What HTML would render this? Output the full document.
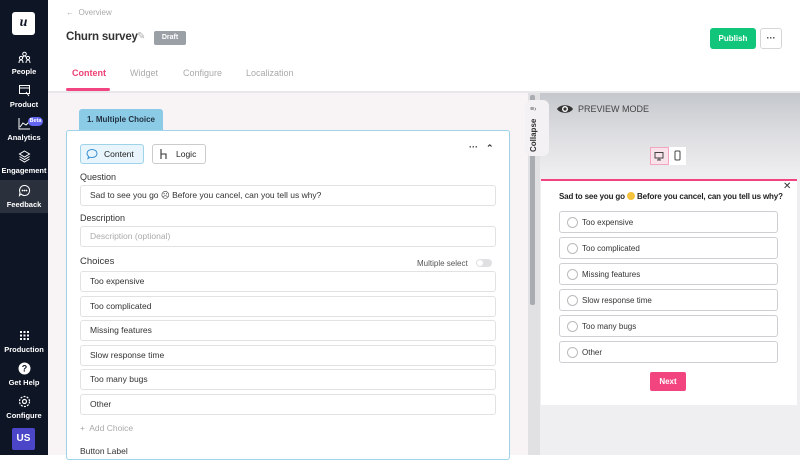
<!DOCTYPE html>
<html><head><style>
*{box-sizing:border-box;margin:0;padding:0}
body{width:800px;height:455px;overflow:hidden;font-family:"Liberation Sans",sans-serif;background:#fff;position:relative;color:#333}
.a{position:absolute}
.sb{left:0;top:0;width:48px;height:455px;background:#0e1525}
.ni{position:absolute;left:0;width:48px;text-align:center;color:#fff;font-size:7.5px;font-weight:bold}
.ni svg{display:block;margin:0 auto 3px}
.inp{position:absolute;left:80px;width:416px;height:21px;border:1px solid #e2e2e4;border-radius:3px;background:#fff;font-size:8.5px;padding-left:9px;line-height:19px;color:#333}
.lbl{position:absolute;left:80px;font-size:9px;color:#333}
.op{position:absolute;left:559px;width:219px;height:22px;border:1px solid #cfcfd3;border-radius:3px;font-size:8px;line-height:21px;padding-left:22px;color:#333}
.op:before{content:"";position:absolute;left:7px;top:5px;width:9px;height:9px;border:1px solid #bbb;border-radius:50%}
</style></head><body>
<div class="a sb"></div>
<div class="a" style="left:12px;top:12px;width:23px;height:23px;background:#fff;border-radius:3px;font:italic bold 14px 'Liberation Serif',serif;color:#0e1525;text-align:center;line-height:22px">u</div>
<div class="ni" style="top:51px"><svg width="13" height="13" viewBox="0 0 13 13" fill="none" stroke="#fff" stroke-width="1"><circle cx="6.5" cy="3" r="1.8"/><circle cx="3" cy="7" r="1.6"/><circle cx="10" cy="7" r="1.6"/><path d="M1 12c0-2 1-3 2-3s2 1 2 3M8 12c0-2 1-3 2-3s2 1 2 3M4.5 8c0-2 1-3 2-3s2 1 2 3"/></svg>People</div>
<div class="ni" style="top:84px"><svg width="13" height="13" viewBox="0 0 13 13" fill="none" stroke="#fff" stroke-width="1"><rect x="1.5" y="1.5" width="10" height="8"/><path d="M1.5 4h10M8 8l3 4"/></svg>Product</div>
<div class="ni" style="top:117px"><svg width="13" height="13" viewBox="0 0 13 13" fill="none" stroke="#fff" stroke-width="1"><path d="M1 1v11h11M2 10l3-4 3 2 4-4"/></svg>Analytics</div>
<div class="a" style="left:28px;top:117px;width:15px;height:9px;background:#6366f1;border-radius:5px;color:#fff;font-size:5.5px;text-align:center;line-height:9px;font-weight:bold">Beta</div>
<div class="ni" style="top:150px"><svg width="13" height="13" viewBox="0 0 13 13" fill="none" stroke="#fff" stroke-width="1"><path d="M6.5 1l5 3-5 3-5-3zM1.5 6.5l5 3 5-3M1.5 9l5 3 5-3"/></svg>Engagement</div>
<div class="a" style="left:0;top:180px;width:48px;height:33px;background:#2a303c"></div>
<div class="ni" style="top:184px"><svg width="13" height="13" viewBox="0 0 13 13" fill="none" stroke="#fff" stroke-width="1"><path d="M6.5 1.5a5 5 0 1 1-3.5 8.5L1.5 11.5l.5-3a5 5 0 0 1 4.5-7z"/><circle cx="4.5" cy="6.5" r=".4"/><circle cx="6.5" cy="6.5" r=".4"/><circle cx="8.5" cy="6.5" r=".4"/></svg>Feedback</div>
<div class="ni" style="top:329px"><svg width="13" height="13" viewBox="0 0 13 13" fill="#fff"><rect x="2" y="2" width="2" height="2"/><rect x="5.5" y="2" width="2" height="2"/><rect x="9" y="2" width="2" height="2"/><rect x="2" y="5.5" width="2" height="2"/><rect x="5.5" y="5.5" width="2" height="2"/><rect x="9" y="5.5" width="2" height="2"/><rect x="2" y="9" width="2" height="2"/><rect x="5.5" y="9" width="2" height="2"/><rect x="9" y="9" width="2" height="2"/></svg>Production</div>
<div class="ni" style="top:362px"><svg width="13" height="13" viewBox="0 0 13 13"><circle cx="6.5" cy="6.5" r="6" fill="#fff"/><text x="6.5" y="9.5" font-size="9" font-weight="bold" text-anchor="middle" fill="#0e1525">?</text></svg>Get Help</div>
<div class="ni" style="top:395px"><svg width="13" height="13" viewBox="0 0 13 13" fill="none" stroke="#fff" stroke-width="1.2"><circle cx="6.5" cy="6.5" r="2"/><circle cx="6.5" cy="6.5" r="5" stroke-dasharray="2 1.2"/></svg>Configure</div>
<div class="a" style="left:12px;top:428px;width:23px;height:22px;background:#4b46c8;border-radius:2px;color:#fff;font-size:10px;font-weight:bold;text-align:center;line-height:22px">US</div>

<div class="a" style="left:66px;top:8px;font-size:8px;color:#aaa">&#8592;&nbsp;&nbsp;Overview</div>
<div class="a" style="left:66px;top:31px;font-size:11.5px;font-weight:bold;color:#333;letter-spacing:-0.2px">Churn survey</div>
<div class="a" style="left:137px;top:31px;font-size:10px;color:#aaa">&#9998;</div>
<div class="a" style="left:154px;top:31px;width:32px;height:14px;background:#9aa0a6;border-radius:2px;color:#fff;font-size:7px;font-weight:bold;text-align:center;line-height:14px">Draft</div>
<div class="a" style="left:710px;top:28px;width:46px;height:21px;background:#11c57a;border-radius:3px;color:#fff;font-size:8px;font-weight:bold;text-align:center;line-height:21px">Publish</div>
<div class="a" style="left:760px;top:28px;width:22px;height:21px;border:1px solid #d6d6d8;border-radius:3px;text-align:center;line-height:19px;font-size:9px;color:#333;font-weight:bold">···</div>
<div class="a" style="left:72px;top:68px;font-size:9px;font-weight:bold;color:#ee3f74">Content</div>
<div class="a" style="left:130px;top:68px;font-size:9px;color:#aaa">Widget</div>
<div class="a" style="left:183px;top:68px;font-size:9px;color:#aaa">Configure</div>
<div class="a" style="left:246px;top:68px;font-size:9px;color:#aaa">Localization</div>
<div class="a" style="left:66px;top:88px;width:44px;height:3px;background:#f2457f;border-radius:2px"></div>
<div class="a" style="left:48px;top:91px;width:752px;height:2px;background:#e8e8ea"></div>

<div class="a" style="left:48px;top:93px;width:480px;height:362px;background:#f8f4f6"></div>
<div class="a" style="left:79px;top:109px;width:84px;height:22px;background:#8ccbe5;border-radius:3px 3px 0 0;font-size:8px;font-weight:bold;color:#234;text-align:center;line-height:21px">1. Multiple Choice</div>
<div class="a" style="left:66px;top:130px;width:444px;height:330px;background:#fff;border:1px solid #9fd3ea;border-radius:3px"></div>
<div class="a" style="left:80px;top:144px;width:64px;height:20px;border:1px solid #9fd3ea;background:#e8f5fc;border-radius:3px;font-size:8.5px;line-height:18px;padding-left:23px;color:#222">Content</div>
<svg class="a" style="left:86px;top:148px" width="12" height="12" viewBox="0 0 12 12" fill="none" stroke="#3a8fd0" stroke-width="1"><path d="M6 1.5c3 0 5 1.8 5 4s-2 4-5 4c-.7 0-1.3-.1-1.9-.3L2 10.5l.6-2.2C1.6 7.6 1 6.6 1 5.5c0-2.2 2-4 5-4z"/></svg>
<div class="a" style="left:152px;top:144px;width:54px;height:20px;border:1px solid #ccc;border-radius:3px;font-size:8.5px;line-height:18px;padding-left:23px;color:#222">Logic</div>
<svg class="a" style="left:159px;top:148px" width="10" height="12" viewBox="0 0 10 12" fill="none" stroke="#333" stroke-width="1.1"><path d="M2 1v10M2 6h5v5"/></svg>
<div class="a" style="left:469px;top:142px;font-size:9px;font-weight:bold">···</div>
<div class="a" style="left:486px;top:143px;font-size:9px;font-weight:bold">&#8963;</div>
<div class="lbl" style="top:172px">Question</div>
<div class="inp" style="top:185px">Sad to see you go &#9785; Before you cancel, can you tell us why?</div>
<div class="lbl" style="top:213px">Description</div>
<div class="inp" style="top:226px;color:#aaa">Description (optional)</div>
<div class="lbl" style="top:256px;font-size:9.5px">Choices</div>
<div class="a" style="left:417px;top:259px;font-size:8px;color:#555">Multiple select</div>
<div class="a" style="left:476px;top:259px;width:16px;height:8px;background:#e0e0e2;border-radius:4px"><div style="width:6px;height:6px;margin:1px;background:#fff;border-radius:50%"></div></div>
<div class="inp" style="top:271px">Too expensive</div>
<div class="inp" style="top:296px">Too complicated</div>
<div class="inp" style="top:320px">Missing features</div>
<div class="inp" style="top:345px">Slow response time</div>
<div class="inp" style="top:369px">Too many bugs</div>
<div class="inp" style="top:394px">Other</div>
<div class="a" style="left:80px;top:423px;font-size:8.5px;color:#aaa">+&nbsp; Add Choice</div>
<div class="lbl" style="top:446px;font-size:8.5px">Button Label</div>

<div class="a" style="left:528px;top:93px;width:12px;height:362px;background:#e1e1e4"></div>
<div class="a" style="left:530px;top:95px;width:5px;height:210px;background:#a9acb0;border-radius:2px"></div>
<div class="a" style="left:540px;top:93px;width:260px;height:362px;background:linear-gradient(#c4c7cc 0,#dcdde0 40px,#eeedef 80px,#efeef0 100%)"></div>
<div class="a" style="left:525px;top:100px;width:24px;height:56px;background:#f3f1f3;border-radius:6px"></div>
<div class="a" style="left:530px;top:106px;font-size:7px;color:#555">&#8801;&#8250;</div>
<div class="a" style="left:529px;top:152px;font-size:8px;color:#333;transform:rotate(-90deg);transform-origin:0 0;font-weight:bold">Collapse</div>
<svg class="a" style="left:556px;top:103px" width="18" height="12" viewBox="0 0 18 12"><path d="M1 6C4 1 14 1 17 6C14 11 4 11 1 6z" fill="#333"/><circle cx="9" cy="6" r="3" fill="#fff"/><circle cx="9" cy="6" r="1.6" fill="#333"/></svg>
<div class="a" style="left:578px;top:104px;font-size:9px;color:#444">PREVIEW MODE</div>
<div class="a" style="left:650px;top:147px;width:19px;height:18px;background:#f8e3ea;border:1px solid #f2a5bf"></div>
<svg class="a" style="left:654px;top:151px" width="10" height="10" viewBox="0 0 10 10" fill="none" stroke="#444"><rect x="1" y="1.5" width="8" height="5.5"/><path d="M5 7v2M3 9h4"/></svg>
<div class="a" style="left:669px;top:147px;width:17px;height:18px;background:#fff"></div>
<svg class="a" style="left:674px;top:150px" width="7" height="11" viewBox="0 0 7 11" fill="none" stroke="#444"><rect x="1" y="1" width="5" height="9" rx="1"/></svg>
<div class="a" style="left:541px;top:179px;width:256px;height:226px;background:#fff;border-top:2px solid #f2457f"></div>
<div class="a" style="left:783px;top:181px;font-size:10px;color:#333">&#10005;</div>
<div class="a" style="left:559px;top:192px;font-size:8px;font-weight:bold;color:#222;white-space:nowrap;letter-spacing:-0.15px">Sad to see you go <span style="display:inline-block;width:8px;height:8px;border-radius:50%;background:#f5c23e;vertical-align:-1px"></span> Before you cancel, can you tell us why?</div>
<div class="op" style="top:211px">Too expensive</div>
<div class="op" style="top:237px">Too complicated</div>
<div class="op" style="top:263px">Missing features</div>
<div class="op" style="top:289px">Slow response time</div>
<div class="op" style="top:315px">Too many bugs</div>
<div class="op" style="top:341px">Other</div>
<div class="a" style="left:650px;top:372px;width:36px;height:19px;background:#f2457f;border-radius:2px;color:#fff;font-size:8px;font-weight:bold;text-align:center;line-height:19px">Next</div>
</body></html>
